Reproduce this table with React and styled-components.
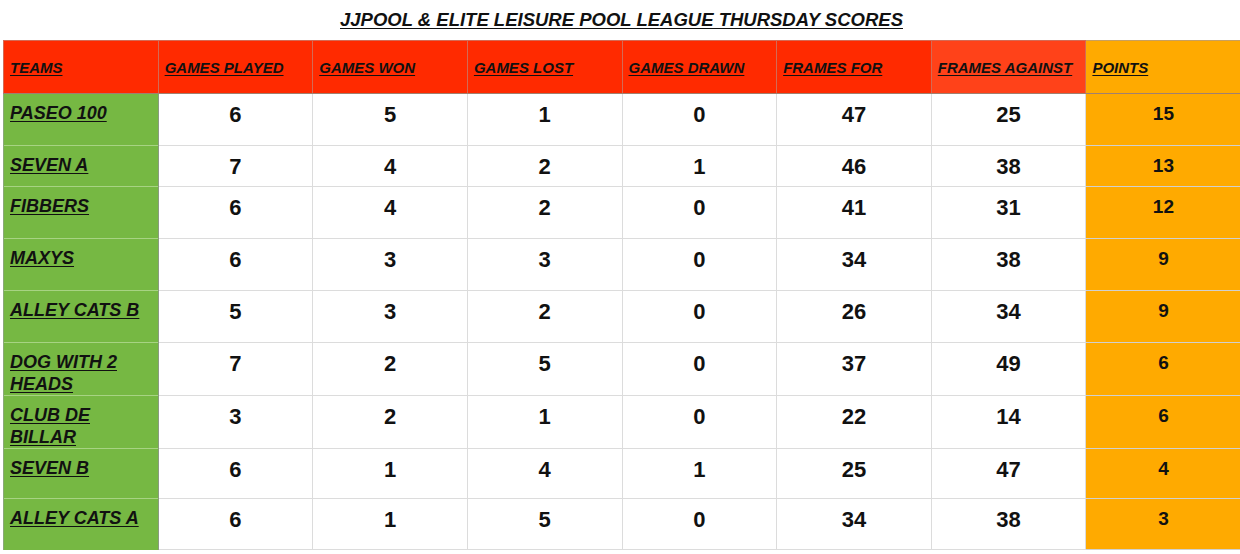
import React from "react"
import styled, { createGlobalStyle } from "styled-components"

const GlobalStyle = createGlobalStyle`
  body {
    margin: 0;
    background: #ffffff;
    font-family: "Liberation Sans", Arial, sans-serif;
  }
`

const Page = styled.div`
  width: 1240px;
  height: 554px;
  overflow: hidden;
  background: #ffffff;
`

const Title = styled.h1`
  margin: 0;
  height: 40px;
  display: flex;
  align-items: center;
  justify-content: center;
  padding: 0 0 1px 3px;
  box-sizing: border-box;
  font-size: 18.5px;
  font-weight: bold;
  font-style: italic;
  text-decoration: underline;
  text-underline-offset: 2px;
  color: #111;
`

const Table = styled.table`
  margin-left: 3px;
  width: 1238px;
  table-layout: fixed;
  border-collapse: collapse;
  border-top: 1px solid #b0b0b0;
`

const HeadCell = styled.th`
  height: 52px;
  padding: 0 0 0 6px;
  text-align: left;
  vertical-align: middle;
  background: ${p => p.$bg};
  border: 1px solid ${p => p.$line || "#d46a55"};
  border-bottom: 1px solid #a08070;
  font-size: 15px;
  font-weight: bold;
  font-style: italic;
  text-decoration: underline;
  text-underline-offset: 2px;
  color: #111;
  white-space: nowrap;
  overflow: hidden;
`

const TeamCell = styled.td`
  background: #76b843;
  padding: 8px 4px 0 6px;
  vertical-align: top;
  border-top: 1px solid #a7d383;
  border-left: 1px solid #8aa878;
  border-right: 1px solid #8a9a80;
  font-size: 18px;
  line-height: 22px;
  font-weight: bold;
  font-style: italic;
  text-decoration: underline;
  text-underline-offset: 2px;
  color: #111;
`

const NumCell = styled.td`
  padding: 8px 0 0 0;
  vertical-align: top;
  text-align: center;
  background: #ffffff;
  border: 1px solid #dcdcdc;
  border-top-color: ${p => (p.$dark ? "#a8a8a8" : "#dcdcdc")};
  font-size: 22px;
  line-height: 26px;
  font-weight: bold;
  color: #111;
`

const PointsCell = styled.td`
  padding: 8px 0 0 0;
  vertical-align: top;
  text-align: center;
  background: #ffaa00;
  border-top: 1px solid ${p => (p.$dark ? "#b08a40" : "#ffc24a")};
  border-left: 1px solid #c8a060;
  border-bottom: 1px solid #d0d0d0;
  font-size: 19px;
  line-height: 24px;
  font-weight: bold;
  color: #111;
`

const Row = styled.tr`
  height: ${p => p.$h}px;
`

const headers = [
  ["TEAMS", "#ff2a00"],
  ["GAMES PLAYED", "#ff2a00"],
  ["GAMES WON", "#ff2a00"],
  ["GAMES LOST", "#ff2a00"],
  ["GAMES DRAWN", "#ff2a00"],
  ["FRAMES FOR", "#ff2a00"],
  ["FRAMES AGAINST", "#ff4219"],
  ["POINTS", "#ffaa00"],
]

const rows = [
  { team: "PASEO 100", h: 52, v: [6, 5, 1, 0, 47, 25], pts: 15 },
  { team: "SEVEN A", h: 41, v: [7, 4, 2, 1, 46, 38], pts: 13 },
  { team: "FIBBERS", h: 52, v: [6, 4, 2, 0, 41, 31], pts: 12 },
  { team: "MAXYS", h: 52, v: [6, 3, 3, 0, 34, 38], pts: 9 },
  { team: "ALLEY CATS B", h: 52, v: [5, 3, 2, 0, 26, 34], pts: 9 },
  { team: "DOG WITH 2 HEADS", h: 53, v: [7, 2, 5, 0, 37, 49], pts: 6 },
  { team: "CLUB DE BILLAR", h: 52, v: [3, 2, 1, 0, 22, 14], pts: 6 },
  { team: "SEVEN B", h: 50, v: [6, 1, 4, 1, 25, 47], pts: 4 },
  { team: "ALLEY CATS A", h: 51, v: [6, 1, 5, 0, 34, 38], pts: 3, dark: true },
]

export default function App() {
  return (
    <Page>
      <GlobalStyle />
      <Title>JJPOOL &amp; ELITE LEISURE POOL LEAGUE THURSDAY SCORES</Title>
      <Table>
        <thead>
          <tr>
            {headers.map(([label, bg]) => (
              <HeadCell key={label} $bg={bg} $line={bg === "#ffaa00" ? "#c8a060" : undefined}>
                {label}
              </HeadCell>
            ))}
          </tr>
        </thead>
        <tbody>
          {rows.map(r => (
            <Row key={r.team} $h={r.h}>
              <TeamCell>{r.team}</TeamCell>
              {r.v.map((n, i) => (
                <NumCell key={i} $dark={r.dark}>{n}</NumCell>
              ))}
              <PointsCell $dark={r.dark}>{r.pts}</PointsCell>
            </Row>
          ))}
        </tbody>
      </Table>
    </Page>
  )
}
